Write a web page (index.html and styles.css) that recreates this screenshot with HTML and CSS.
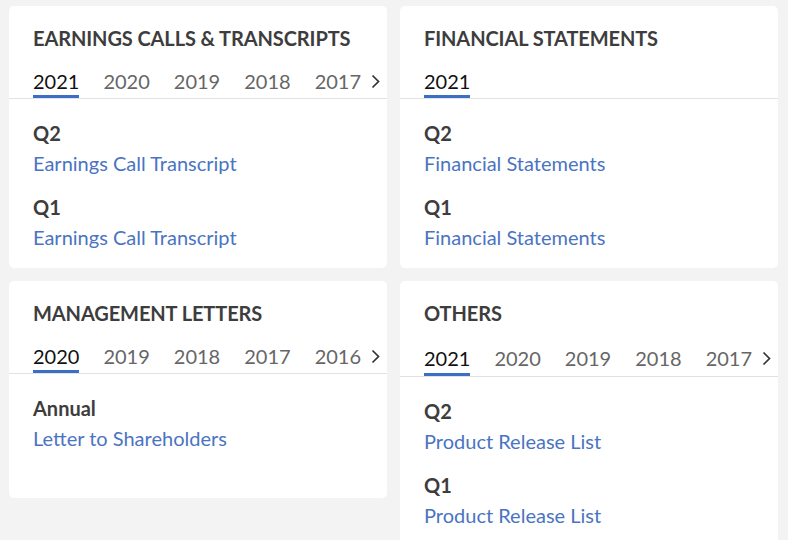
FILE: index.html
```html
<!DOCTYPE html>
<html>
<head>
	<meta charset="utf-8">
	<meta name="viewport" content="width=device-width, initial-scale=1">
	<title>Investor Documents</title>
	<link rel="stylesheet" href="styles.css">
</head>
<body>
	<main class="grid">
		<section class="card">
			<h2>EARNINGS CALLS &amp; TRANSCRIPTS</h2>
			<div class="tabs">
				<span class="tab active">2021</span>
				<span class="tab">2020</span>
				<span class="tab">2019</span>
				<span class="tab">2018</span>
				<span class="tab">2017</span>
				<svg class="more" width="9" height="15" viewBox="0 0 9 15"><polyline points="1.5,1.5 7.5,7.5 1.5,13.5" fill="none" stroke="#333" stroke-width="1.7"/></svg>
			</div>
			<div class="items">
				<div class="item">
					<h3>Q2</h3>
					<a href="#">Earnings Call Transcript</a>
				</div>
				<div class="item">
					<h3>Q1</h3>
					<a href="#">Earnings Call Transcript</a>
				</div>
			</div>
		</section>
		<section class="card">
			<h2>FINANCIAL STATEMENTS</h2>
			<div class="tabs">
				<span class="tab active">2021</span>
			</div>
			<div class="items">
				<div class="item">
					<h3>Q2</h3>
					<a href="#">Financial Statements</a>
				</div>
				<div class="item">
					<h3>Q1</h3>
					<a href="#">Financial Statements</a>
				</div>
			</div>
		</section>
		<section class="card short">
			<h2>MANAGEMENT LETTERS</h2>
			<div class="tabs">
				<span class="tab active">2020</span>
				<span class="tab">2019</span>
				<span class="tab">2018</span>
				<span class="tab">2017</span>
				<span class="tab">2016</span>
				<svg class="more" width="9" height="15" viewBox="0 0 9 15"><polyline points="1.5,1.5 7.5,7.5 1.5,13.5" fill="none" stroke="#333" stroke-width="1.7"/></svg>
			</div>
			<div class="items">
				<div class="item">
					<h3>Annual</h3>
					<a href="#">Letter to Shareholders</a>
				</div>
			</div>
		</section>
		<section class="card others">
			<h2>OTHERS</h2>
			<div class="tabs">
				<span class="tab active">2021</span>
				<span class="tab">2020</span>
				<span class="tab">2019</span>
				<span class="tab">2018</span>
				<span class="tab">2017</span>
				<svg class="more" width="9" height="15" viewBox="0 0 9 15"><polyline points="1.5,1.5 7.5,7.5 1.5,13.5" fill="none" stroke="#333" stroke-width="1.7"/></svg>
			</div>
			<div class="items">
				<div class="item">
					<h3>Q2</h3>
					<a href="#">Product Release List</a>
				</div>
				<div class="item">
					<h3>Q1</h3>
					<a href="#">Product Release List</a>
				</div>
			</div>
		</section>
	</main>
</body>
</html>
```

FILE: styles.css
```css
body{margin: 0;background-color: #f3f3f3;font-family: 'Lato', sans-serif;color: #3d3d3d;}
.grid{display: grid;grid-template-columns: minmax(0, 1fr) minmax(0, 1fr);gap: 13px;padding: 6px 10px 0 9px;align-items: start;}
.card{background-color: #fff;border-radius: 5px;overflow: hidden;}
.card h2{margin: 0;padding: 20px 24px 0;font-size: 20px;line-height: 24px;font-weight: 700;color: #3d3d3d;letter-spacing: -0.1px;white-space: nowrap;}
.tabs{display: flex;align-items: flex-start;gap: 24px;margin-top: 19px;padding: 0 0 0 24px;border-bottom: 1px solid #e2e2e2;}
.tab{font-size: 20px;line-height: 24px;color: #666;padding-bottom: 2px;border-bottom: 3px solid transparent;}
.tab.active{color: #111;border-bottom-color: #3b6fc4;}
.more{flex: none;margin-left: -14px;margin-top: 5px;}
.items{padding: 22px 24px 19px;}
.item + .item{margin-top: 20px;}
.item h3{margin: 0;font-size: 20px;line-height: 24px;font-weight: 700;color: #3d3d3d;}
.item a{display: block;margin-top: 6px;font-size: 20px;line-height: 24px;color: #4a74c2;text-decoration: none;}
.short .items{padding-bottom: 48px;}
.others .tabs{margin-top: 21px;}
.others .tab{padding-bottom: 3px;}
```
